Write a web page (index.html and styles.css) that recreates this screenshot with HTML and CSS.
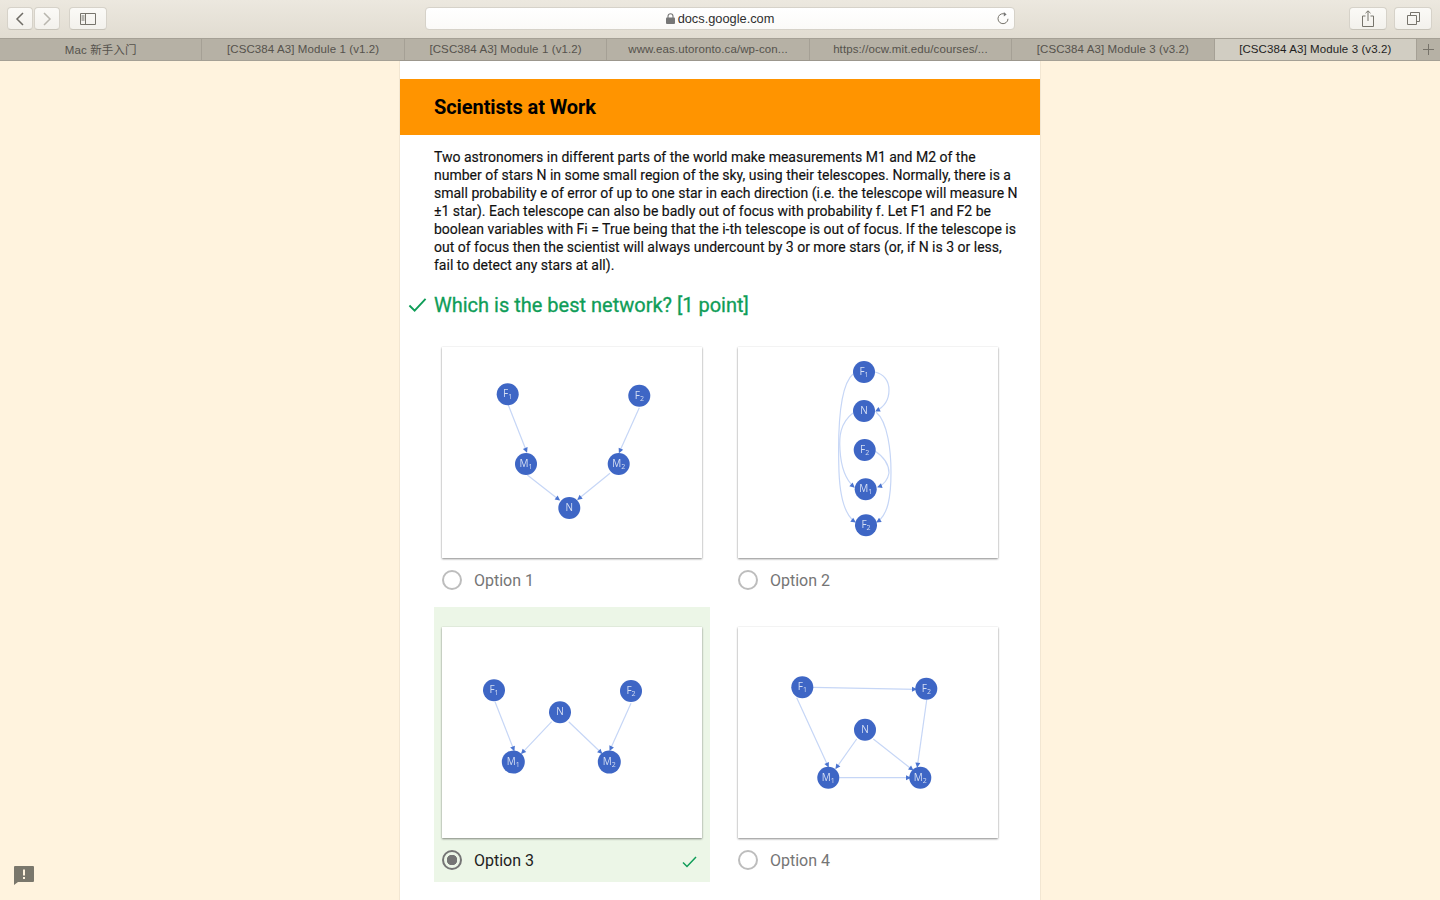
FILE: index.html
```html
<!DOCTYPE html>
<html lang="en">
<head>
  <meta charset="UTF-8" />
  <title>[CSC384 A3] Module 3 (v3.2)</title>
  <link rel="stylesheet" href="styles.css">
</head>
<body>
  <header class="toolbar">
    <div class="tool-left">
      <div class="nav-btns">
        <button class="btn btn-nav"><svg width="10" height="14" viewBox="0 0 10 14"><path d="M8 1L2 7l6 6" class="ico"/></svg></button>
        <button class="btn btn-nav"><svg width="10" height="14" viewBox="0 0 10 14"><path d="M2 1l6 6-6 6" class="ico ico-off"/></svg></button>
      </div>
      <button class="btn btn-wide"><svg width="16" height="12" viewBox="0 0 16 12"><path d="M.5.5h15v11H.5zM5.500.5v11" class="ico-thin"/><path d="M1.500 3h3M1.500 5h3M1.500 7h3" class="ico-thin"/></svg></button>
    </div>
    <div class="address">
      <span class="url"><svg width="9" height="11" viewBox="0 0 9 11"><path d="M2 5V3.200a2.500 2.500 0 0 1 5 0V5" fill="none" stroke="#777" stroke-width="1.100"/><rect y="4.600" width="9" height="6.400" rx="1" fill="#777"/></svg>docs.google.com</span>
      <svg class="reload" width="12" height="14" viewBox="0 0 12 14"><path d="M8.900 3.600A5 5 0 1 0 11 7.800" class="ico-thin"/><path d="M6.800 1L9.600 3.400 6.800 5.400z" fill="#777"/></svg>
    </div>
    <div class="tool-right">
      <button class="btn btn-wide"><svg width="12" height="17" viewBox="0 0 12 17"><path d="M3.500 6H.5v10.500h11V6h-3M6 11V1M3.500 3.200L6 .8l2.500 2.400" class="ico-thin"/></svg></button>
      <button class="btn btn-wide"><svg width="13" height="13" viewBox="0 0 13 13"><path d="M.5 3.500h9v9h-9zM3.500 3.500v-3h9v9h-3" class="ico-thin"/></svg></button>
    </div>
  </header>

  <nav class="tabs">
    <div class="tab">Mac 新手入门</div>
    <div class="tab">[CSC384 A3] Module 1 (v1.2)</div>
    <div class="tab">[CSC384 A3] Module 1 (v1.2)</div>
    <div class="tab">www.eas.utoronto.ca/wp-con...</div>
    <div class="tab">https://ocw.mit.edu/courses/...</div>
    <div class="tab">[CSC384 A3] Module 3 (v3.2)</div>
    <div class="tab tab-active">[CSC384 A3] Module 3 (v3.2)</div>
    <div class="tab tab-plus"><svg width="11" height="11" viewBox="0 0 11 11"><path d="M5.500 0v11M0 5.500h11" stroke="#77736a" stroke-width="1"/></svg></div>
  </nav>

  <main class="page">
    <div class="sheet">
      <h1 class="banner">Scientists at Work</h1>
      <p class="intro">Two astronomers in different parts of the world make measurements M1 and M2 of the number of stars N in some small region of the sky, using their telescopes. Normally, there is a small probability e of error of up to one star in each direction (i.e. the telescope will measure N ±1 star). Each telescope can also be badly out of focus with probability f. Let F1 and F2 be boolean variables with Fi = True being that the i-th telescope is out of focus. If the telescope is out of focus then the scientist will always undercount by 3 or more stars (or, if N is 3 or less, fail to detect any stars at all).</p>
      <h2 class="question">
        <svg class="q-check" width="20" height="16" viewBox="0 0 20 16"><path d="M1.500 8.500l5.500 5.500L18.500 1.500" fill="none" stroke="#0f9d58" stroke-width="2"/></svg>
        Which is the best network? [1 point]
      </h2>

      <div class="options">
        <div class="option">
          <div class="card">
            <svg class="net" viewBox="0 0 260 211">
              <defs><marker id="a1" markerUnits="userSpaceOnUse" markerWidth="6" markerHeight="6" refX="4" refY="2.500" orient="auto" overflow="visible"><path d="M0 0l5 2.500-5 2.500z" fill="#4a74d0"/></marker></defs>
              <line class="edge" x1="66.300" y1="58" x2="84.700" y2="104.700" marker-end="url(#a1)"/>
              <line class="edge" x1="197.300" y1="60.700" x2="177.300" y2="105.300" marker-end="url(#a1)"/>
              <line class="edge" x1="85.300" y1="128" x2="117.300" y2="153" marker-end="url(#a1)"/>
              <line class="edge" x1="168" y1="126.300" x2="136" y2="152.300" marker-end="url(#a1)"/>
              <circle class="node" cx="65.700" cy="47.300" r="11"/><text class="lbl" x="65.700" y="50.300">F<tspan class="sub" dy="2">1</tspan></text>
              <circle class="node" cx="197.300" cy="48.700" r="11"/><text class="lbl" x="197.300" y="51.700">F<tspan class="sub" dy="2">2</tspan></text>
              <circle class="node" cx="84" cy="117" r="11"/><text class="lbl" x="84" y="120">M<tspan class="sub" dy="2">1</tspan></text>
              <circle class="node" cx="176.700" cy="117" r="11"/><text class="lbl" x="176.700" y="120">M<tspan class="sub" dy="2">2</tspan></text>
              <circle class="node" cx="127.300" cy="161" r="11"/><text class="lbl" x="127.300" y="164">N</text>
            </svg>
          </div>
          <label class="choice"><span class="radio"></span>Option 1</label>
        </div>

        <div class="option">
          <div class="card">
            <svg class="net" viewBox="0 0 260 211">
              <defs><marker id="a2" markerUnits="userSpaceOnUse" markerWidth="6" markerHeight="6" refX="4" refY="2.500" orient="auto" overflow="visible"><path d="M0 0l5 2.500-5 2.500z" fill="#4a74d0"/></marker></defs>
              <path class="edge" d="M137 25C146 27 151 34 151 43C151 54 146 60 138 64" marker-end="url(#a2)"/>
              <path class="edge" d="M115 27C100 40 100 95 101 125C102 150 107 168 117 175" marker-end="url(#a2)"/>
              <path class="edge" d="M115 66C102 76 101 90 102 103C103 120 108 133 116 140" marker-end="url(#a2)"/>
              <path class="edge" d="M138 65C150 75 153 105 153 125C153 150 150 168 139 175" marker-end="url(#a2)"/>
              <path class="edge" d="M137 104C146 110 151 118 151 126C150 132 146 138 140 140" marker-end="url(#a2)"/>
              <circle class="node" cx="126" cy="25" r="11"/><text class="lbl" x="126" y="28">F<tspan class="sub" dy="2">1</tspan></text>
              <circle class="node" cx="126" cy="64" r="11"/><text class="lbl" x="126" y="67">N</text>
              <circle class="node" cx="126.700" cy="103" r="11"/><text class="lbl" x="126.700" y="106">F<tspan class="sub" dy="2">2</tspan></text>
              <circle class="node" cx="127.700" cy="142.300" r="11"/><text class="lbl" x="127.700" y="145.300">M<tspan class="sub" dy="2">1</tspan></text>
              <circle class="node" cx="128" cy="178.300" r="11"/><text class="lbl" x="128" y="181.300">F<tspan class="sub" dy="2">2</tspan></text>
            </svg>
          </div>
          <label class="choice"><span class="radio"></span>Option 2</label>
        </div>

        <div class="option option-correct">
          <div class="card">
            <svg class="net" viewBox="0 0 260 211">
              <defs><marker id="a3" markerUnits="userSpaceOnUse" markerWidth="6" markerHeight="6" refX="4" refY="2.500" orient="auto" overflow="visible"><path d="M0 0l5 2.500-5 2.500z" fill="#4a74d0"/></marker></defs>
              <line class="edge" x1="53" y1="74.700" x2="72" y2="123.300" marker-end="url(#a3)"/>
              <line class="edge" x1="189" y1="76.300" x2="168" y2="123" marker-end="url(#a3)"/>
              <line class="edge" x1="109.700" y1="94.700" x2="79.700" y2="126.300" marker-end="url(#a3)"/>
              <line class="edge" x1="126.700" y1="94.700" x2="159.700" y2="126.300" marker-end="url(#a3)"/>
              <circle class="node" cx="52" cy="63.300" r="11"/><text class="lbl" x="52" y="66.300">F<tspan class="sub" dy="2">1</tspan></text>
              <circle class="node" cx="189" cy="64" r="11"/><text class="lbl" x="189" y="67">F<tspan class="sub" dy="2">2</tspan></text>
              <circle class="node" cx="118" cy="85.300" r="11"/><text class="lbl" x="118" y="88.300">N</text>
              <circle class="node" cx="71.300" cy="135" r="11.500"/><text class="lbl" x="71.300" y="138">M<tspan class="sub" dy="2">1</tspan></text>
              <circle class="node" cx="167.300" cy="135" r="11.500"/><text class="lbl" x="167.300" y="138">M<tspan class="sub" dy="2">2</tspan></text>
            </svg>
          </div>
          <label class="choice choice-picked"><span class="radio radio-on"></span>Option 3
            <svg class="tick" width="15" height="12" viewBox="0 0 15 12"><path d="M1 6.500l4 4L14 1" fill="none" stroke="#0f9d58" stroke-width="1.500"/></svg>
          </label>
        </div>

        <div class="option">
          <div class="card">
            <svg class="net" viewBox="0 0 260 211">
              <defs><marker id="a4" markerUnits="userSpaceOnUse" markerWidth="6" markerHeight="6" refX="4" refY="2.500" orient="auto" overflow="visible"><path d="M0 0l5 2.500-5 2.500z" fill="#4a74d0"/></marker></defs>
              <line class="edge" x1="75" y1="60.300" x2="178" y2="62.300" marker-end="url(#a4)"/>
              <line class="edge" x1="58.700" y1="70.700" x2="90.300" y2="139.700" marker-end="url(#a4)"/>
              <line class="edge" x1="188.700" y1="73" x2="179.300" y2="139.700" marker-end="url(#a4)"/>
              <line class="edge" x1="118.700" y1="112" x2="98" y2="141.300" marker-end="url(#a4)"/>
              <line class="edge" x1="135.300" y1="112" x2="174.700" y2="143" marker-end="url(#a4)"/>
              <line class="edge" x1="101.300" y1="150.700" x2="172" y2="150.700" marker-end="url(#a4)"/>
              <circle class="node" cx="64.300" cy="60.300" r="11"/><text class="lbl" x="64.300" y="63.300">F<tspan class="sub" dy="2">1</tspan></text>
              <circle class="node" cx="188.300" cy="61.700" r="11"/><text class="lbl" x="188.300" y="64.700">F<tspan class="sub" dy="2">2</tspan></text>
              <circle class="node" cx="127" cy="102.700" r="11"/><text class="lbl" x="127" y="105.700">N</text>
              <circle class="node" cx="90.300" cy="150.700" r="11"/><text class="lbl" x="90.300" y="153.700">M<tspan class="sub" dy="2">1</tspan></text>
              <circle class="node" cx="182.300" cy="150.700" r="11"/><text class="lbl" x="182.300" y="153.700">M<tspan class="sub" dy="2">2</tspan></text>
            </svg>
          </div>
          <label class="choice"><span class="radio"></span>Option 4</label>
        </div>
      </div>
    </div>
  </main>

  <svg class="feedback" width="22" height="20" viewBox="0 0 22 20"><path d="M2 1h18a1 1 0 0 1 1 1v14a1 1 0 0 1-1 1H5l-4 3V2a1 1 0 0 1 1-1z" fill="#7a776c"/><path d="M10 4.500h2v6h-2zM10 12h2v2h-2z" fill="#fff3de"/></svg>
</body>
</html>
```

FILE: styles.css
```css
html, body {
  margin: 0;
  height: 100%;
  overflow: hidden;
}
body {
  display: flex;
  flex-direction: column;
  background: #fff3de;
  font-family: Roboto, sans-serif;
}

/* browser chrome */
.toolbar {
  display: grid;
  grid-template-columns: 1fr 590px 1fr;
  align-items: center;
  height: 38px;
  box-sizing: border-box;
  padding-bottom: 1px;
  background: linear-gradient(#ece8df, #e1dcd1);
}
.tool-left, .tool-right {
  display: flex;
  align-items: center;
}
.tool-left { padding-left: 7px; gap: 9px; }
.tool-right { justify-content: flex-end; padding-right: 8px; gap: 7px; }
.nav-btns { display: flex; gap: 1px; }
.btn {
  display: flex;
  align-items: center;
  justify-content: center;
  height: 23px;
  padding: 0;
  background: linear-gradient(#fbfaf7, #f3f1ec);
  border: 1px solid #d6d2c9;
  border-bottom-color: #c8c4ba;
  border-radius: 4px;
}
.btn-nav { width: 26px; }
.btn-wide { width: 38px; }
.ico { fill: none; stroke: #6f6c65; stroke-width: 1.500; }
.ico-off { stroke: #b9b6ae; }
.ico-thin { fill: none; stroke: #77746c; stroke-width: 1; }
.address {
  position: relative;
  display: flex;
  align-items: center;
  justify-content: center;
  height: 23px;
  background: linear-gradient(#ffffff, #fbfaf8);
  border: 1px solid #d6d2c9;
  border-radius: 4px;
  box-sizing: border-box;
  font-family: "Liberation Sans", sans-serif;
  font-size: 12.800px;
  color: #2f2f2f;
}
.url { display: flex; align-items: center; gap: 3px; }
.reload { position: absolute; right: 5px; top: 3px; }

.tabs {
  display: grid;
  grid-template-columns: repeat(7, 1fr) 23px;
  height: 23px;
  box-sizing: border-box;
  background: #b6b1a5;
  border-top: 1px solid #a5a095;
  border-bottom: 1px solid #a5a095;
}
.tab {
  display: flex;
  align-items: center;
  justify-content: center;
  padding-bottom: 2px;
  border-right: 1px solid #a5a095;
  font-family: "Liberation Sans", "Noto Sans CJK SC", sans-serif;
  font-size: 11.500px;
  letter-spacing: 0.1px;
  color: #55524c;
}
.tab-active { background: #d1cdc2; color: #1e1e1e; }
.tab-plus { border-right: 0; padding-bottom: 0; }

/* form sheet */
.page {
  flex: 1;
  display: flex;
  justify-content: center;
  min-height: 0;
}
.sheet {
  width: 640px;
  padding-top: 18px;
  background: #fff;
  box-shadow: 0 0 1px rgba(0, 0, 0, 0.3);
}
.banner {
  margin: 0;
  padding: 0 34px;
  height: 56px;
  line-height: 56px;
  background: #ff9400;
  color: #000;
  font-size: 20px;
  font-weight: 700;
  letter-spacing: -0.08px;
}
.intro {
  margin: 13px 22px 0 34px;
  font-size: 14px;
  line-height: 18px;
  color: #111;
  -webkit-text-stroke: 0.15px #111;
}
.question {
  display: flex;
  align-items: center;
  gap: 7px;
  margin: 17px 0 0 8px;
  height: 28px;
  font-size: 20px;
  font-weight: 400;
  color: #0f9d58;
  -webkit-text-stroke: 0.3px #0f9d58;
}
.q-check { flex: none; width: 19px; }

.options {
  display: grid;
  grid-template-columns: 276px 276px;
  column-gap: 20px;
  row-gap: 5px;
  margin: 8px 0 0 34px;
}
.option { padding: 20px 8px 0; height: 275px; box-sizing: border-box; }
.option-correct { background: #ecf6e7; }
.card {
  height: 211px;
  background: #fff;
  box-shadow: 0 1px 2px rgba(0, 0, 0, 0.45), 0 0 1px rgba(0, 0, 0, 0.1);
}
.net { display: block; width: 260px; height: 211px; filter: blur(0.35px); }
.edge { fill: none; stroke: #c6d6f6; stroke-width: 1.200; }
.node { fill: #3e66c5; }
.lbl {
  fill: #d5def3;
  font-family: "Open Sans", sans-serif;
  font-size: 10px;
  text-anchor: middle;
}
.sub { font-size: 7px; }

.choice {
  display: flex;
  align-items: center;
  gap: 12px;
  height: 44px;
  font-size: 16px;
  color: #757575;
}
.choice-picked { color: #212121; }
.radio {
  flex: none;
  width: 20px;
  height: 20px;
  box-sizing: border-box;
  border: 2px solid #bdbdbd;
  border-radius: 50%;
}
.radio-on {
  border-color: #757575;
  background: radial-gradient(circle, #757575 0 5px, transparent 5.500px);
}
.tick { margin-left: auto; margin-right: 5px; margin-top: 3px; }

.feedback { position: fixed; left: 13px; bottom: 15px; }
```
